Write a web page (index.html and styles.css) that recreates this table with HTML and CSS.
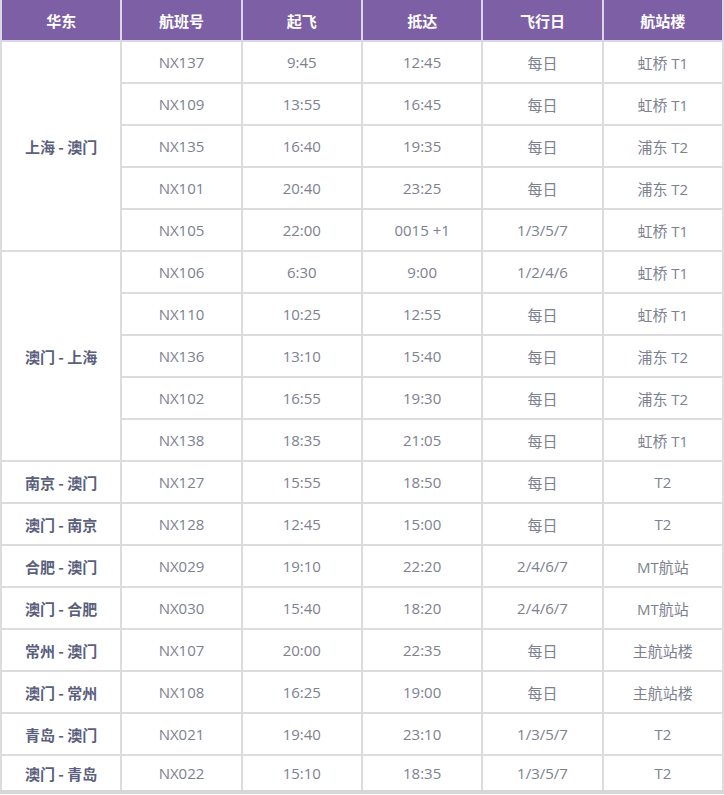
FILE: index.html
```html
<!DOCTYPE html>
<html lang="zh">
<head>
<meta charset="utf-8">
<link rel="stylesheet" href="styles.css">
</head>
<body>
<table class="schedule">
<thead>
<tr><th>华东</th><th>航班号</th><th>起飞</th><th>抵达</th><th>飞行日</th><th>航站楼</th></tr>
</thead>
<tbody>
<tr><td class="route" rowspan="5">上海 - 澳门</td><td>NX137</td><td>9:45</td><td>12:45</td><td>每日</td><td>虹桥 T1</td></tr>
<tr><td>NX109</td><td>13:55</td><td>16:45</td><td>每日</td><td>虹桥 T1</td></tr>
<tr><td>NX135</td><td>16:40</td><td>19:35</td><td>每日</td><td>浦东 T2</td></tr>
<tr><td>NX101</td><td>20:40</td><td>23:25</td><td>每日</td><td>浦东 T2</td></tr>
<tr><td>NX105</td><td>22:00</td><td>0015 +1</td><td>1/3/5/7</td><td>虹桥 T1</td></tr>
<tr><td class="route" rowspan="5">澳门 - 上海</td><td>NX106</td><td>6:30</td><td>9:00</td><td>1/2/4/6</td><td>虹桥 T1</td></tr>
<tr><td>NX110</td><td>10:25</td><td>12:55</td><td>每日</td><td>虹桥 T1</td></tr>
<tr><td>NX136</td><td>13:10</td><td>15:40</td><td>每日</td><td>浦东 T2</td></tr>
<tr><td>NX102</td><td>16:55</td><td>19:30</td><td>每日</td><td>浦东 T2</td></tr>
<tr><td>NX138</td><td>18:35</td><td>21:05</td><td>每日</td><td>虹桥 T1</td></tr>
<tr><td class="route">南京 - 澳门</td><td>NX127</td><td>15:55</td><td>18:50</td><td>每日</td><td>T2</td></tr>
<tr><td class="route">澳门 - 南京</td><td>NX128</td><td>12:45</td><td>15:00</td><td>每日</td><td>T2</td></tr>
<tr><td class="route">合肥 - 澳门</td><td>NX029</td><td>19:10</td><td>22:20</td><td>2/4/6/7</td><td>MT航站</td></tr>
<tr><td class="route">澳门 - 合肥</td><td>NX030</td><td>15:40</td><td>18:20</td><td>2/4/6/7</td><td>MT航站</td></tr>
<tr><td class="route">常州 - 澳门</td><td>NX107</td><td>20:00</td><td>22:35</td><td>每日</td><td>主航站楼</td></tr>
<tr><td class="route">澳门 - 常州</td><td>NX108</td><td>16:25</td><td>19:00</td><td>每日</td><td>主航站楼</td></tr>
<tr><td class="route">青岛 - 澳门</td><td>NX021</td><td>19:40</td><td>23:10</td><td>1/3/5/7</td><td>T2</td></tr>
<tr class="last"><td class="route">澳门 - 青岛</td><td>NX022</td><td>15:10</td><td>18:35</td><td>1/3/5/7</td><td>T2</td></tr>
</tbody>
</table>
</body>
</html>
```

FILE: styles.css
```css
html, body {
  margin: 0;
  padding: 0;
  background: #ffffff;
}

.schedule {
  width: 724px;
  table-layout: fixed;
  border-collapse: collapse;
  font-family: "Open Sans", "Noto Sans CJK SC", sans-serif;
  font-size: 15px;
}

.schedule th {
  height: 40px;
  padding: 0;
  background: #7d5fa6;
  color: #ffffff;
  font-family: "Noto Sans CJK SC", sans-serif;
  font-weight: bold;
  font-size: 15px;
  border: 2px solid #ddd5e8;
  border-top: 0;
}

.schedule td {
  height: 40px;
  padding: 0;
  text-align: center;
  vertical-align: middle;
  color: #7d8190;
  border: 2px solid #dcdcdc;
}

.schedule td.route {
  color: #5b5f7e;
  font-family: "Noto Sans CJK SC", sans-serif;
  font-weight: bold;
  font-size: 15px;
}

.schedule tr.last td {
  height: 34px;
  border-bottom: 4px solid #d6d6d6;
}
```
